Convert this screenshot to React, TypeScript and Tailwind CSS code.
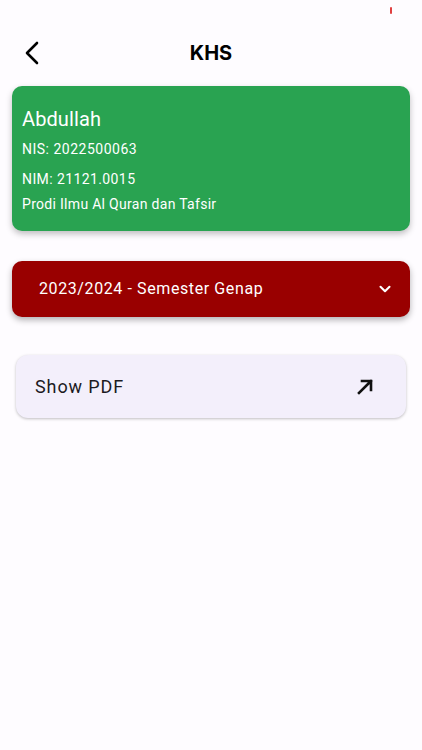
import React from 'react';
import { ChevronDown } from 'lucide-react';

const student = {
  name: 'Abdullah',
  nis: '2022500063',
  nim: '21121.0015',
  prodi: 'Prodi Ilmu Al Quran dan Tafsir',
};

export default function App() {
  return (
    <div className="min-h-[750px] w-[422px] bg-[#fefcff] font-['Roboto',sans-serif] relative">
      {/* status bar remnant */}
      <div className="absolute left-[390px] top-[7px] w-[2px] h-[7px] bg-[#e04040] rounded-sm" />

      {/* Header */}
      <div className="flex items-center h-[54px] pt-[26px] px-[24px] relative box-content">
        <button className="text-black">
          <svg width="16" height="24" viewBox="0 0 16 24" fill="none">
            <polyline points="13,2 3,12 13,22" stroke="currentColor" strokeWidth="2.6" strokeLinecap="round" strokeLinejoin="round" />
          </svg>
        </button>
        <h1 className="absolute left-0 right-0 text-center text-[20px] font-bold text-black font-['Inter',sans-serif] pointer-events-none">
          KHS
        </h1>
      </div>

      <div className="px-[12px] pt-[6px] flex flex-col">
        {/* Student card */}
        <div className="bg-[#29a351] rounded-[10px] shadow-[0_3px_6px_rgba(0,0,0,0.25)] pl-[10px] pt-[21px] pb-[18px] text-white">
          <div className="text-[20px] leading-[24px] tracking-[0.1px]">{student.name}</div>
          <div className="text-[14px] leading-[18px] mt-[9px] tracking-[0.5px]">NIS: {student.nis}</div>
          <div className="text-[14px] leading-[18px] mt-[12px] tracking-[0.4px]">NIM: {student.nim}</div>
          <div className="text-[14px] leading-[18px] mt-[7px] tracking-[0.3px]">{student.prodi}</div>
        </div>

        {/* Semester select */}
        <button className="mt-[30px] h-[56px] bg-[#990000] rounded-[10px] shadow-[0_3px_6px_rgba(0,0,0,0.3)] flex items-center justify-between pl-[27px] pr-[16px] text-white">
          <span className="text-[16px] font-normal tracking-[0.6px]">2023/2024 - Semester Genap</span>
          <ChevronDown size={18} strokeWidth={2.8} />
        </button>

        {/* Show PDF */}
        <button className="mt-[38px] mx-[4px] h-[63px] bg-[#f3effb] rounded-[12px] shadow-[0_1px_3px_rgba(0,0,0,0.25)] flex items-center justify-between pl-[19px] pr-[32px] text-[#1c1b1f]">
          <span className="text-[18px] tracking-[0.9px]">Show PDF</span>
          <svg width="17" height="17" viewBox="0 0 17 17" fill="none">
            <path d="M2 15 L14 3 M5 3 H14 V12" stroke="#111" strokeWidth="2.6" strokeLinecap="square" strokeLinejoin="miter" />
          </svg>
        </button>
      </div>
    </div>
  );
}
